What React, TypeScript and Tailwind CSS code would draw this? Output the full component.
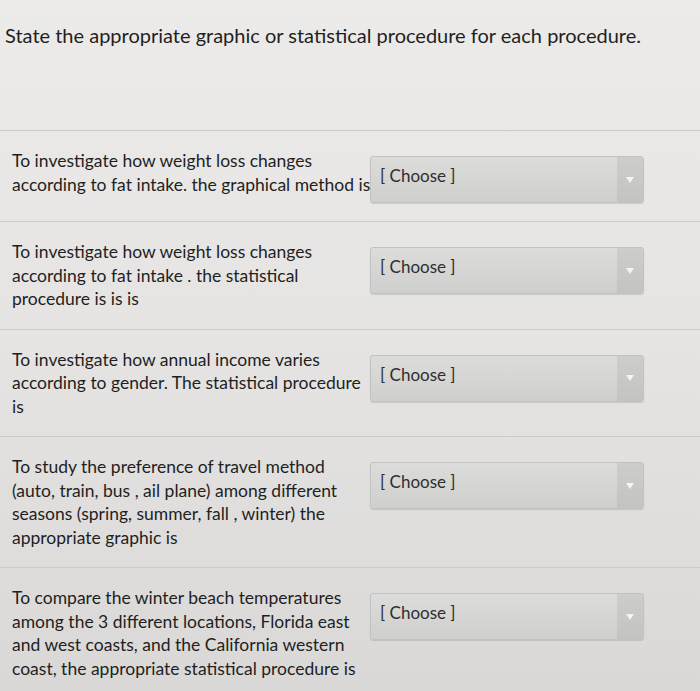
import React from "react";

const items: string[][] = [
  ["To investigate how weight loss changes", "according to fat intake. the graphical method is"],
  ["To investigate how weight loss changes", "according to fat intake . the statistical", "procedure is is is"],
  ["To investigate how annual income varies", "according to gender. The statistical procedure", "is"],
  [
    "To study the preference of travel method",
    "(auto, train, bus , ail plane) among different",
    "seasons (spring, summer, fall , winter) the",
    "appropriate graphic is",
  ],
  [
    "To compare the winter beach temperatures",
    "among the 3 different locations, Florida east",
    "and west coasts, and the California western",
    "coast, the appropriate statistical procedure is",
  ],
];

function ChooseSelect() {
  return (
    <div className="mt-[7px] flex h-[47px] w-[274px] shrink-0 overflow-hidden rounded-[3px] border border-[#c2c2c2] bg-gradient-to-b from-[#dcdcdb] to-[#cfcfce] shadow-[0_1px_1px_rgba(0,0,0,0.12)]">
      <div className="flex-1 pl-[9px] pt-[9px] text-[17px] leading-[20px] text-[#2e2e2e]">[ Choose ]</div>
      <div className="flex w-[26px] items-center justify-center bg-gradient-to-b from-[#cdcdcc] to-[#c3c3c2]">
        <svg width="8" height="6" viewBox="0 0 8 6">
          <path d="M0 0 L8 0 L4 6 Z" fill="#f4f4f4" />
        </svg>
      </div>
    </div>
  );
}

export default function App() {
  return (
    <div
      className="min-h-[691px] w-full bg-gradient-to-b from-[#ecebe9] via-[#e5e4e2] to-[#d9d8d6] text-[#1f1f1f]"
      style={{ fontFamily: "Lato, 'Open Sans', sans-serif" }}
    >
      <div className="border-b border-[#cbcbc9] pb-[82px] pl-[5px] pt-[23px] text-[20px] leading-[25px]">
        State the appropriate graphic or statistical procedure for each procedure.
      </div>

      {items.map((lines, i) => (
        <div key={i} className="flex border-b border-[#cbcbc9] px-[12px] py-[18px]">
          <div className="w-[358px] shrink-0 text-[17.5px] leading-[23.5px]">
            {lines.map((l, j) => (
              <div key={j} className="whitespace-nowrap">
                {l}
              </div>
            ))}
          </div>
          <ChooseSelect />
        </div>
      ))}
    </div>
  );
}
